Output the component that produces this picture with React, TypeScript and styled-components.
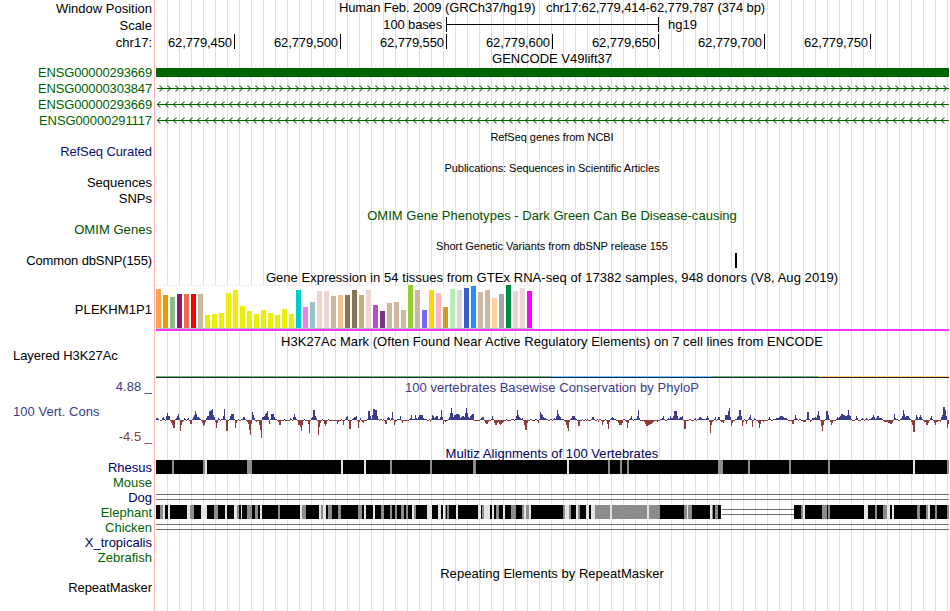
import React from "react";
import styled, { createGlobalStyle } from "styled-components";

const GlobalStyle = createGlobalStyle`
  html, body { margin: 0; padding: 0; background: #fff; }
  body { overflow: hidden; }
`;

const GREEN = "#006400";
const NAVY = "#000064";
const BLUE = "#3c3c8c";
const RED = "#8c3c3c";

const Browser = styled.main`
  width: 949px;
  height: 611px;
  overflow: hidden;
  color: #000;
  font: 13px/17px "Liberation Sans", Arial, sans-serif;
  background:
    linear-gradient(#ffb4b4, #ffb4b4) 154px 0 / 1px 100% no-repeat,
    repeating-linear-gradient(to right, #dcdcff 0 1px, transparent 1px 12px) 167px 0 / 782px 100% no-repeat;
`;

const Row = styled.section<{ $h: number }>`
  display: grid;
  grid-template-columns: 155px 794px;
  height: ${(p) => p.$h}px;
`;

const Label = styled.div<{ $color?: string; $spacing?: number; $top?: number; $left?: boolean }>`
  box-sizing: border-box;
  padding: ${(p) => p.$top ?? 0}px 3px 0 13px;
  text-align: ${(p) => (p.$left ? "left" : "right")};
  white-space: pre;
  color: ${(p) => p.$color ?? "#000"};
  letter-spacing: ${(p) => p.$spacing ?? 0}px;
`;

const LabelStack = styled.div`
  display: grid;
  grid-template-rows: repeat(3, 25px);
`;

const Title = styled.div<{ $color?: string; $small?: boolean; $spacing?: number; $line?: number }>`
  grid-column: 2;
  text-align: center;
  white-space: pre;
  color: ${(p) => p.$color ?? "#000"};
  font-size: ${(p) => (p.$small ? 11 : 13)}px;
  line-height: ${(p) => p.$line ?? (p.$small ? 19 : 17)}px;
  letter-spacing: ${(p) => p.$spacing ?? 0}px;
`;

const ScaleTrack = styled.div`
  display: flex;
  line-height: 15px;
`;

const ScaleText = styled.div`
  width: 287px;
  padding-right: 4px;
  text-align: right;
  letter-spacing: -0.15px;
`;

const ScaleBar = styled.div`
  box-sizing: border-box;
  width: 213px;
  height: 15px;
  margin-right: 9px;
  border: solid #000;
  border-width: 0 1px;
  background: linear-gradient(#000, #000) 0 7px / 100% 1px no-repeat;
`;

const Ruler = styled.div`
  display: flex;
  height: 15px;
`;

const RulerMark = styled.div<{ $w: number }>`
  box-sizing: border-box;
  width: ${(p) => p.$w}px;
  padding-right: 2px;
  border-right: 1px solid #000;
  text-align: right;
  letter-spacing: -0.1px;
`;

const Drawing = styled.svg`
  display: block;
  grid-column: 2;
  width: 794px;
  overflow: visible;
  shape-rendering: crispEdges;
`;

const TrackColumn = styled.div`
  display: flex;
  flex-direction: column;
  gap: 3px;
`;

const Tick = styled.div`
  width: 2px;
  height: 15px;
  margin: 1px 0 0 580px;
  background: #000;
`;

const ExonBar = styled.div`
  height: 9px;
  margin: 4px 0 0 1px;
  background: ${GREEN};
`;

/* Drawings use the full image's x coordinates; the view box starts at 155. */

function Intron({ dir }: { dir: "left" | "right" }) {
  let d = "";
  if (dir === "right") {
    for (let x = 162; x < 949; x += 8) d += `M${x - 2.5} 5.5L${x + 0.5} 8.5L${x - 2.5} 11.5`;
  } else {
    for (let x = 157; x < 946; x += 8) d += `M${x + 3.5} 5.5L${x + 0.5} 8.5L${x + 3.5} 11.5`;
  }
  return (
    <Drawing height={16} viewBox="155 0 794 16">
      <rect x={157} y={8} width={792} height={1} fill={GREEN} />
      <path d={d} fill="none" stroke={GREEN} strokeWidth={1.05} shapeRendering="auto" />
    </Drawing>
  );
}

const TAN = "#cdb79e";
const YEL = "#eeee00";
const PNK = "#eed5d2";
const tissues: [number, string][] = [
  [39, "#ffa54f"], [33, "#ee9a00"], [31, "#8fbc8f"], [34, "#8b1c62"], [34, "#ee6a50"], [34, "#ff0000"], [34, TAN],
  [13, YEL], [14, YEL], [15, YEL], [35, YEL], [38, YEL], [22, YEL], [17, YEL], [14, YEL], [18, YEL], [15, YEL],
  [13, YEL], [19, YEL], [14, YEL], [38, "#00cdcd"], [21, "#ee82ee"], [26, "#9ac0cd"], [37, PNK], [37, PNK],
  [32, TAN], [33, "#eec591"], [33, "#8b7355"], [38, "#8b7355"], [33, "#cdaa7d"], [38, PNK], [23, "#b452cd"],
  [17, "#7a378b"], [25, TAN], [26, TAN], [18, TAN], [43, "#9acd32"], [38, TAN], [18, "#7a67ee"], [38, "#ffd700"],
  [35, "#ffb6c1"], [21, "#cd9b1d"], [39, "#b4eeb4"], [38, "#d9d9d9"], [40, "#3a5fcd"], [42, "#1e90ff"],
  [36, TAN], [38, TAN], [30, "#ffd39b"], [34, "#a6a6a6"], [43, "#008b45"], [37, PNK], [40, PNK], [37, "#ff00ff"],
];

function Expression() {
  return (
    <Drawing height={48} viewBox="155 0 794 48">
      <rect x={156} y={0} width={378} height={44} fill="#f2f2f2" />
      <rect x={156} y={1} width={377} height={42} fill="#fff" />
      <rect x={156} y={43} width={378} height={1} fill="#c0c0c0" />
      {tissues.map(([h, c], i) => (
        <rect key={i} x={156 + i * 7} y={43 - h} width={5} height={h} fill={c} />
      ))}
      <rect x={156} y={44} width={793} height={2} fill="#ff32ff" />
    </Drawing>
  );
}

const markSegments: [number, number, string, string][] = [
  [156, 552, "#6eb46e", "#1e2846"],
  [552, 712, "#6ec8ff", "#142850"],
  [712, 818, "#6eb46e", "#142850"],
  [818, 949, "#ffc864", "#142832"],
];

/* Conservation scores in pixels, one value per column, keyed by first column. */
const scores: [number, number[]][] = [
  [156, [2, 2, 1, 0, -1, -1, 2, 3, 1, -1, 4, 7, 4, 4, -1, -3, -5, -8, -8, 1, 2, 4, 6, 2]],
  [180, [-11, -5, -2, -1, 2, 1, -1, 1, 2, -1, -4, -4, 1, 3, 5, 9, 6, 3, 3, 2]],
  [200, [1, -1, -3, -6, -5, -2, 2, 4, 4, 9, 9, 10, 11, 5, 3, -2, -8, -3, 2, 1]],
  [220, [-1, 1, 1, 4, 11, 1, -11, -11, -1, 1, 4, 6, 6, 6, 1, -8, -3, -1, 1, -1]],
  [240, [-1, 1, 1, 3, 3, 1, -1, -2, -4, -10, -15, -4, 8, 5, 2, -1, -2, -1, -1, -5]],
  [260, [-10, -18, 3, 3, 4, 6, 7, 9, 3, -4, 1, 6, 6, 6, 3, 1, 1, -1, -2, -5]],
  [280, [-5, -1, -1, -1, 1, -1, -1, -1, -1, -1, 2, 1, -1, 3, 6, 3, 1, -1, -5, -5]],
  [300, [-7, -11, -5, -1, 1, -1, -1, -1, -4, -13, -1, 2, 3, 10, 10, 4, 2, -1, -15, -7]],
  [320, [-3, -1, 1, -1, -4, -6, -4, -1, 1, -1, -1, -1, -1, -1, -1, -1, -1, -4, -2, -1]],
  [340, [-1, 1, -1, -5, -1, 1, 3, 4, -1, -9, -9, -1, 1, 2, 3, 3, 4, -1, -8, -2]],
  [360, [2, -1, -2, -3, -1, -1, -1, 1, 9, 9, 4, 1, 5, 11, 11, 10, 10, 4, 1, -1]],
  [380, [1, 1, -1, 1, -1, -4, -4, 2, 3, 2, -1, 2, 8, 1, -5, -2, -1, 1, 1, 1]],
  [400, [4, -1, -3, -1, -1, -1, -1, -1, -1, 1, 2, 5, 1, 1, 1, 5, 2, 1, 3, 5]],
  [420, [5, 5, 5, 2, 1, 1, 1, -1, -1, 1, -2, 1, 5, 4, 2, 3, 4, 4, 1, 1]],
  [440, [3, 10, 3, -4, -1, -2, -1, -1, 1, 3, 7, 12, 7, 3, 5, 5, 6, 6, 6, 5]],
  [460, [2, 3, 4, 4, 3, 7, 12, 7, 3, 2, 4, 5, 6, 6, -1, -1, -1, -1, -1, -1]],
  [480, [1, 2, 3, 3, -1, -3, -4, -4, -2, -1, -1, 1, 4, 1, -3, -5, -5, -3, -2, -4]],
  [500, [-5, -4, -3, -2, -1, -1, 1, -1, -1, -1, -1, 1, 1, 1, -1, 1, 4, 10, 5, 3]],
  [520, [2, 1, 2, -1, -5, -10, -10, -3, -1, -1, 1, 1, -1, -1, -1, 1, 1, -1, -3, 1]],
  [540, [8, 6, 5, 3, 2, 2, 1, 1, -1, -1, 1, 1, -1, 1, 2, 1, 4, 10, 6, 4]],
  [560, [3, 1, 1, 1, -1, -2, -5, -8, -11, -2, 1, 2, 4, 4, 4, 2, 1, -1, -6, -6]],
  [580, [-1, -1, 1, -1, -1, 1, -1, 1, -1, -1, -1, 1, 3, 3, 1, -1, -1, 1, -2, 1]],
  [600, [1, -1, -5, -2, -1, 1, -1, -4, -9, -2, 1, 2, 3, 2, 1, 1, -1, -1, -3, -5]],
  [620, [-5, -5, -3, 1, 1, -1, -2, -8, -3, 1, 2, 4, 1, -1, 1, 1, 1, 4, 10, 2]],
  [640, [-1, -1, -1, -1, -2, -4, -6, -6, -5, -5, -4, -4, -3, -2, -1, -1, -1, -2, -1, -1]],
  [660, [1, 1, 2, 4, 1, -1, -1, 1, 2, 1, 4, 2, 2, 4, 9, 9, 9, 4, 1, 2]],
  [680, [3, 3, 4, -1, -9, -9, -1, -1, -1, 1, 1, -1, -1, -1, 1, 2, -1, 1, 1, 3]],
  [700, [3, 2, 1, 1, 1, 1, 2, 4, 2, -2, -13, -5, -2, -1, 1, 3, -1, 1, 3, 3]],
  [720, [-1, -2, -2, -3, -1, 5, 5, 5, 9, 12, 3, -6, -3, -1, -1, 1, 1, 3, 4, 10]],
  [740, [10, 4, -6, -2, 1, -1, -4, -1, 1, 3, 5, 1, -7, -1, 2, 1, -1, -1, -3, -8]],
  [760, [-4, -1, -1, -2, -1, -1, -1, -1, 1, 3, 1, -1, -1, 1, 1, 1, 2, 2, 2, 3]],
  [780, [4, 4, 4, 3, 2, 2, 2, 1, -1, -1, -1, -1, -4, -4, 1, 5, 2, 1, -1, 1]],
  [800, [1, -1, -1, -2, -2, -2, 1, 8, 8, 1, -2, -1, 2, 2, 2, 3, 2, 5, 9, 4]],
  [820, [-1, -6, -11, -5, -1, 1, 9, 9, 5, 1, -2, -5, -3, -1, -1, -1, 1, 3, 2, 3]],
  [840, [4, 6, 6, 5, 5, 4, 4, 5, 10, 5, 4, 1, -1, -1, -1, 1, 4, 2, -1, -1]],
  [860, [-1, 1, 2, 1, -1, 1, 2, 1, -1, 1, 1, 2, 3, 5, 3, 1, 2, 4, 4, 2]],
  [880, [2, 2, 1, -1, -2, -2, -2, -2, -3, -3, -4, -4, -3, -1, 6, 2, 1, 1, -1, -1]],
  [900, [1, 2, 4, 10, 6, 3, 4, 4, 4, 2, 1, -2, -5, -12, -12, 1, 5, 3, 1, 3]],
  [920, [5, 3, 1, -1, -2, -2, -5, -5, -3, -1, 2, 4, 1, -1, -3, -5, -2, -2, -1, -1]],
  [940, [-2, 3, 5, 13, 13, 10, 4, -8, -4]],
];

function Conservation() {
  return (
    <Drawing height={40} viewBox="155 22 794 40">
      {scores.flatMap(([start, values]) =>
        values.map((v, i) =>
          v === 0 ? null : (
            <rect
              key={start + i}
              x={start + i}
              y={v > 0 ? 42 - v : 42}
              width={1}
              height={Math.abs(v)}
              fill={v > 0 ? BLUE : RED}
            />
          ),
        ),
      )}
    </Drawing>
  );
}

type Band = [number, number];
const rhesusGrey: Band[] = [
  [172, 2], [203, 2], [247, 5], [390, 2], [430, 2], [473, 3], [608, 2], [620, 2], [627, 2],
  [718, 5], [748, 2], [789, 2], [828, 2], [947, 2],
];
const rhesusLight: Band[] = [[205, 2], [341, 2], [364, 2], [567, 2], [913, 2]];
const elephantGrey: Band[] = [
  [160, 3], [190, 4], [214, 4], [237, 2], [247, 5], [255, 3], [278, 2], [302, 4], [321, 2], [328, 4], [338, 3],
  [358, 4], [381, 3], [390, 2], [395, 2], [401, 3], [406, 2], [414, 2], [445, 1], [447, 2], [482, 2], [496, 3],
  [511, 5], [522, 2], [526, 3], [563, 2], [569, 2], [578, 2], [595, 65], [684, 3], [688, 4], [712, 1],
  [715, 3], [801, 2], [822, 5], [828, 2], [875, 2], [883, 4], [917, 3], [926, 2], [935, 2], [947, 2],
];
const elephantLight: Band[] = [
  [163, 2], [168, 2], [187, 3], [201, 6], [225, 2], [234, 3], [241, 1], [260, 2], [300, 2], [319, 2], [323, 3],
  [364, 2], [373, 2], [412, 2], [427, 5], [438, 3], [443, 2], [456, 2], [478, 3], [484, 6], [492, 2], [503, 2],
  [524, 2], [529, 2], [565, 4], [576, 2], [586, 3], [591, 4], [610, 2], [647, 2], [687, 1], [710, 2],
  [803, 2], [864, 4], [887, 3], [892, 2], [928, 2],
];

function Alignment({ blocks, grey, light, gap }: { blocks: Band[]; grey: Band[]; light: Band[]; gap?: Band }) {
  return (
    <Drawing height={15} viewBox="155 0 794 15">
      {blocks.map(([x, w]) => (
        <rect key={x} x={x} y={1} width={w} height={14} fill="#000" />
      ))}
      {grey.map(([x, w]) => (
        <rect key={x} x={x} y={1} width={w} height={14} fill="#8c8c8c" />
      ))}
      {light.map(([x, w]) => (
        <rect key={x} x={x} y={1} width={w} height={14} fill="#e4e4e4" />
      ))}
      {gap && <path d={`M${gap[0]} 5.5h${gap[1]}m0 5h-${gap[1]}`} stroke="#707070" />}
    </Drawing>
  );
}

function UnalignedLines() {
  return (
    <Drawing height={15} viewBox="155 0 794 15">
      <path d="M156 5.5h793M156 10.5h793" stroke="#707070" />
    </Drawing>
  );
}

const positions = ["450", "500", "550", "600", "650", "700", "750"];

export default function App() {
  return (
    <>
      <GlobalStyle />
      <Browser>
        <Row $h={17}>
          <Label>Window Position</Label>
          <Title $line={15} $spacing={-0.1}>{"Human Feb. 2009 (GRCh37/hg19)   chr17:62,779,414-62,779,787 (374 bp)"}</Title>
        </Row>
        <Row $h={17}>
          <Label>Scale</Label>
          <ScaleTrack>
            <ScaleText>100 bases</ScaleText>
            <ScaleBar />
            <span>hg19</span>
          </ScaleTrack>
        </Row>
        <Row $h={16}>
          <Label>chr17:</Label>
          <Ruler>
            {positions.map((p, i) => (
              <RulerMark key={p} $w={i === 0 ? 80 : 106}>{`62,779,${p}`}</RulerMark>
            ))}
          </Ruler>
        </Row>

        <Row $h={14}><Title>GENCODE V49lift37</Title></Row>
        <Row $h={16}><Label $color={GREEN} $spacing={-0.16}>ENSG00000293669</Label><ExonBar /></Row>
        <Row $h={16}><Label $color={GREEN} $spacing={-0.16}>ENSG00000303847</Label><Intron dir="right" /></Row>
        <Row $h={16}><Label $color={GREEN} $spacing={-0.16}>ENSG00000293669</Label><Intron dir="left" /></Row>
        <Row $h={16}><Label $color={GREEN} $spacing={-0.1}>ENSG00000291117</Label><Intron dir="left" /></Row>

        <Row $h={15}><Title $small $spacing={-0.04}>RefSeq genes from NCBI</Title></Row>
        <Row $h={16}><Label $color="#0c0c78" $spacing={-0.1}>RefSeq Curated</Label></Row>

        <Row $h={15}><Title $small $spacing={-0.06}>Publications: Sequences in Scientific Articles</Title></Row>
        <Row $h={16}><Label>Sequences</Label></Row>
        <Row $h={17}><Label>SNPs</Label></Row>

        <Row $h={14}><Title $color="#005000" $spacing={0.02}>OMIM Gene Phenotypes - Dark Green Can Be Disease-causing</Title></Row>
        <Row $h={16}><Label $color="#005000" $spacing={0.05}>OMIM Genes</Label></Row>

        <Row $h={15}><Title $small $spacing={-0.03}>Short Genetic Variants from dbSNP release 155</Title></Row>
        <Row $h={17}><Label $spacing={-0.12}>Common dbSNP(155)</Label><Tick /></Row>

        <Row $h={16}><Title $spacing={0.055}>Gene Expression in 54 tissues from GTEx RNA-seq of 17382 samples, 948 donors (V8, Aug 2019)</Title></Row>
        <Row $h={48}><Label $top={16} $spacing={0.06}>PLEKHM1P1</Label><Expression /></Row>

        <Row $h={14}><Title $spacing={0.05}>H3K27Ac Mark (Often Found Near Active Regulatory Elements) on 7 cell lines from ENCODE</Title></Row>
        <Row $h={31}>
          <Label $left $spacing={-0.05}>Layered H3K27Ac</Label>
          <Drawing height={31} viewBox="155 0 794 31">
            {markSegments.map(([a, b, top, bottom]) => (
              <g key={a}>
                <rect x={a} y={29} width={b - a} height={1} fill={top} />
                <rect x={a} y={30} width={b - a} height={1} fill={bottom} />
              </g>
            ))}
          </Drawing>
        </Row>

        <Row $h={67}>
          <LabelStack>
            <Label $color={BLUE}>4.88 _</Label>
            <Label $left $color={BLUE} $spacing={0.04}>100 Vert. Cons</Label>
            <Label $color={RED}>-4.5 _</Label>
          </LabelStack>
          <TrackColumn>
            <Title $color={BLUE} $line={19} $spacing={0.04}>100 vertebrates Basewise Conservation by PhyloP</Title>
            <Conservation />
          </TrackColumn>
        </Row>

        <Row $h={14}><Title $color={NAVY} $spacing={0.05}>Multiz Alignments of 100 Vertebrates</Title></Row>
        <Row $h={15}>
          <Label $color={NAVY}>Rhesus</Label>
          <Alignment blocks={[[156, 793]]} grey={rhesusGrey} light={rhesusLight} />
        </Row>
        <Row $h={15}><Label $color={GREEN}>Mouse</Label></Row>
        <Row $h={15}><Label $color={NAVY}>Dog</Label><UnalignedLines /></Row>
        <Row $h={15}>
          <Label $color={GREEN}>Elephant</Label>
          <Alignment blocks={[[156, 565], [794, 155]]} grey={elephantGrey} light={elephantLight} gap={[722, 72]} />
        </Row>
        <Row $h={15}><Label $color={GREEN}>Chicken</Label><UnalignedLines /></Row>
        <Row $h={15}><Label $color={NAVY}>X_tropicalis</Label></Row>
        <Row $h={16}><Label $color={GREEN}>Zebrafish</Label></Row>

        <Row $h={14}><Title $spacing={0.03}>Repeating Elements by RepeatMasker</Title></Row>
        <Row $h={32}><Label $spacing={-0.06}>RepeatMasker</Label></Row>
      </Browser>
    </>
  );
}
